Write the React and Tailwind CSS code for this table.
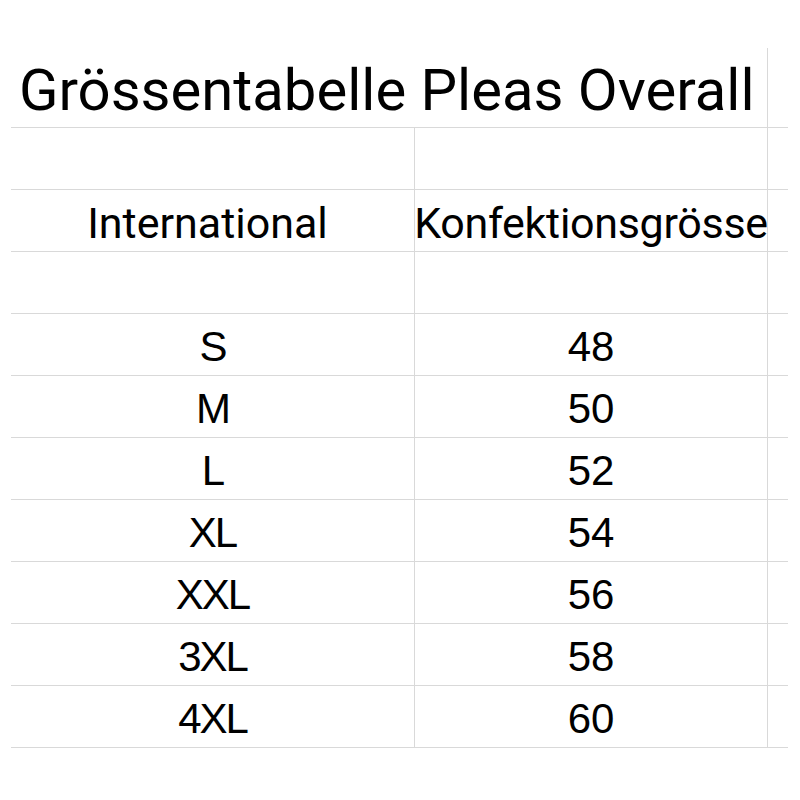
import React from "react";

const sizes = [
  ["S", "48"],
  ["M", "50"],
  ["L", "52"],
  ["XL", "54"],
  ["XXL", "56"],
  ["3XL", "58"],
  ["4XL", "60"],
];

const headFont = { fontFamily: "Roboto, 'Liberation Sans', sans-serif" };
const cellFont = { fontFamily: "'Liberation Sans', Arial, sans-serif" };

function Row({ a, b, head }) {
  const text = head
    ? "h-[61px] flex justify-center pt-[12px] text-[43px] leading-none whitespace-nowrap"
    : "h-[61px] flex justify-center pt-[12px] text-[42px] leading-none whitespace-nowrap";
  return (
    <div className="flex border-b border-[#d9d9d9]" style={head ? headFont : cellFont}>
      <div className={`w-[404px] border-r border-[#d9d9d9] ${text} ${head ? "pr-[10px]" : "tracking-[-2px]"}`}>{a}</div>
      <div className={`w-[353px] border-r border-[#d9d9d9] ${text} ${head ? "tracking-[-0.3px]" : ""}`}>{b}</div>
      <div className="flex-1 h-[61px]" />
    </div>
  );
}

export default function App() {
  return (
    <div className="w-[800px] h-[800px] bg-white text-black pt-[48px] pl-[11px] pr-[12px]">
      <div className="flex border-b border-[#d9d9d9]">
        <div
          className="w-[757px] h-[79px] border-r border-[#d9d9d9] pl-[8px] pt-[13px] text-[58px] leading-none whitespace-nowrap"
          style={headFont}
        >
          Grössentabelle Pleas Overall
        </div>
        <div className="flex-1" />
      </div>
      <Row a="" b="" />
      <Row a="International" b="Konfektionsgrösse" head />
      <Row a="" b="" />
      {sizes.map(([a, b]) => (
        <Row key={a} a={a} b={b} />
      ))}
    </div>
  );
}
